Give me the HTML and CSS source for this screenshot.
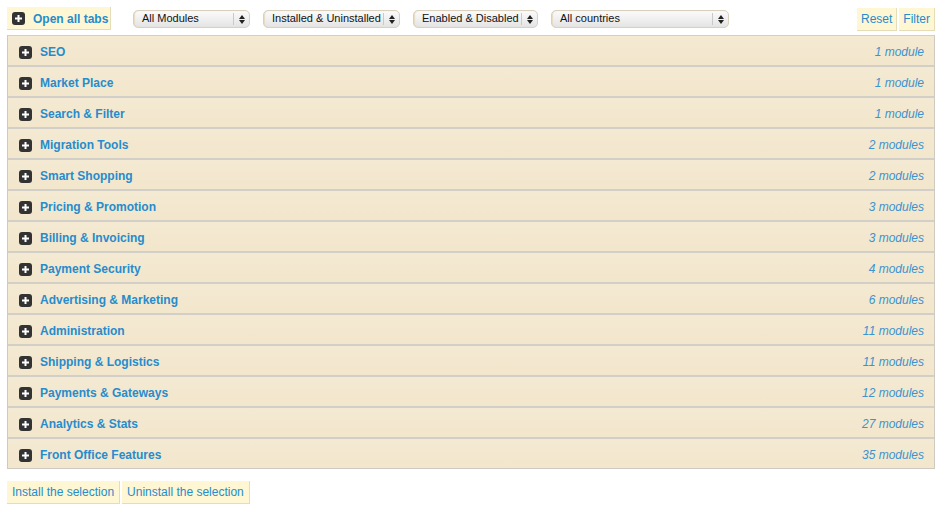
FILE: index.html
```html
<!DOCTYPE html>
<html><head><meta charset="utf-8">
 <title>Modules</title>
 <link rel="stylesheet" href="styles.css">
</head>
<body>
  <div id="modules">
    <div class="toolbar">
      <a class="btn open-all" href="#"><span class="plus"></span>Open all tabs</a>
      <div class="filters">
        <div class="select w-modules"><span>All Modules</span><i></i></div>
        <div class="select w-installed"><span>Installed &amp; Uninstalled</span><i></i></div>
        <div class="select w-enabled"><span>Enabled &amp; Disabled</span><i></i></div>
        <div class="select w-countries"><span>All countries</span><i></i></div>
      </div>
      <div class="actions">
        <a class="btn" href="#">Reset</a>
        <a class="btn" href="#">Filter</a>
      </div>
    </div>

    <ul class="tabs">
      <li><a href="#"><span class="plus"></span>SEO</a><em>1 module</em></li>
      <li><a href="#"><span class="plus"></span>Market Place</a><em>1 module</em></li>
      <li><a href="#"><span class="plus"></span>Search &amp; Filter</a><em>1 module</em></li>
      <li><a href="#"><span class="plus"></span>Migration Tools</a><em>2 modules</em></li>
      <li><a href="#"><span class="plus"></span>Smart Shopping</a><em>2 modules</em></li>
      <li><a href="#"><span class="plus"></span>Pricing &amp; Promotion</a><em>3 modules</em></li>
      <li><a href="#"><span class="plus"></span>Billing &amp; Invoicing</a><em>3 modules</em></li>
      <li><a href="#"><span class="plus"></span>Payment Security</a><em>4 modules</em></li>
      <li><a href="#"><span class="plus"></span>Advertising &amp; Marketing</a><em>6 modules</em></li>
      <li><a href="#"><span class="plus"></span>Administration</a><em>11 modules</em></li>
      <li><a href="#"><span class="plus"></span>Shipping &amp; Logistics</a><em>11 modules</em></li>
      <li><a href="#"><span class="plus"></span>Payments &amp; Gateways</a><em>12 modules</em></li>
      <li><a href="#"><span class="plus"></span>Analytics &amp; Stats</a><em>27 modules</em></li>
      <li><a href="#"><span class="plus"></span>Front Office Features</a><em>35 modules</em></li>
    </ul>

    <div class="bottom">
      <a class="btn" href="#">Install the selection</a>
      <a class="btn" href="#">Uninstall the selection</a>
    </div>
  </div>
</body></html>
```

FILE: styles.css
```css
body {
  margin: 0;
  padding: 0;
  background: #fff;
  font-family: "Liberation Sans", Arial, Helvetica, sans-serif;
  font-size: 12px;
}
a {
  text-decoration: none;
  color: #268ccd;
}
#modules {
  padding: 7px 10px 0 7px;
}
.toolbar {
  display: flex;
  align-items: flex-start;
  height: 28px;
}
.btn {
  display: inline-block;
  background: #fff6d3;
  border-right: 1px solid #e5dcb8;
  border-bottom: 1px solid #e5dcb8;
  padding: 0 4px;
  height: 22px;
  line-height: 22px;
  font-size: 12px;
  white-space: nowrap;
}
.open-all {
  display: flex;
  align-items: center;
  box-sizing: border-box;
  width: 104px;
  padding: 1px 0 0 5px;
  height: 23px;
  font-weight: bold;
}
.plus {
  position: relative;
  display: inline-block;
  width: 13px;
  height: 13px;
  border-radius: 3px;
  background: #333;
  margin-right: 8px;
  flex: none;
}
.plus:before, .plus:after {
  content: "";
  position: absolute;
  background: #fff;
}
.plus:before {
  left: 3px;
  top: 6px;
  width: 7px;
  height: 1px;
  box-shadow: 0 -0.5px 0 #fff, 0 0.5px 0 #fff;
}
.plus:after {
  left: 6px;
  top: 3px;
  width: 1px;
  height: 7px;
  box-shadow: -0.5px 0 0 #fff, 0.5px 0 0 #fff;
}
.filters {
  display: flex;
  margin: 3px 0 0 22px;
}
.select {
  display: flex;
  box-sizing: border-box;
  height: 18px;
  border: 1px solid #d9d0bd;
  border-radius: 5px;
  background: linear-gradient(#fbfbfb, #e4e4e4);
  box-shadow: inset 1px 0 1px #e8dcc0;
  font-size: 11px;
  color: #111;
  margin-right: 13px;
}
.select span {
  flex: 1;
  padding-left: 8px;
  line-height: 15px;
  white-space: nowrap;
}
.select i {
  position: relative;
  width: 15px;
  border-left: 1px solid #c9c9c9;
  margin: 2px 0;
}
.select i:before, .select i:after {
  content: "";
  position: absolute;
  left: 5px;
  border-left: 3px solid transparent;
  border-right: 3px solid transparent;
}
.select i:before {
  top: 2px;
  border-bottom: 4px solid #222;
}
.select i:after {
  top: 7px;
  border-top: 4px solid #222;
}
.w-modules { width: 117px; }
.w-installed { width: 137px; }
.w-enabled { width: 125px; }
.w-countries { width: 178px; margin-right: 0; }
.actions {
  margin-left: auto;
  display: flex;
  gap: 2px;
  padding-top: 1px;
}
.tabs {
  list-style: none;
  margin: 0;
  padding: 0;
  border: 1px solid #cfcac0;
  border-top: 0;
}
.tabs li {
  display: flex;
  align-items: center;
  justify-content: space-between;
  box-sizing: border-box;
  height: 31px;
  border-top: 2px solid #d2cfc8;
  background: linear-gradient(#f4e9d2, #f2e6cc);
  padding: 3px 10px 0 10px;
}
.tabs li:first-child {
  border-top: 1px solid #d2cfc8;
  height: 30px;
}
.tabs a {
  display: flex;
  align-items: center;
  font-weight: bold;
  font-size: 12px;
  padding-left: 1px;
}
.tabs em {
  color: #3b93cf;
  font-size: 12px;
}
.bottom {
  display: flex;
  gap: 2px;
  margin-top: 12px;
}
.bottom .btn {
  padding: 0 5px 0 5px;
}
```
